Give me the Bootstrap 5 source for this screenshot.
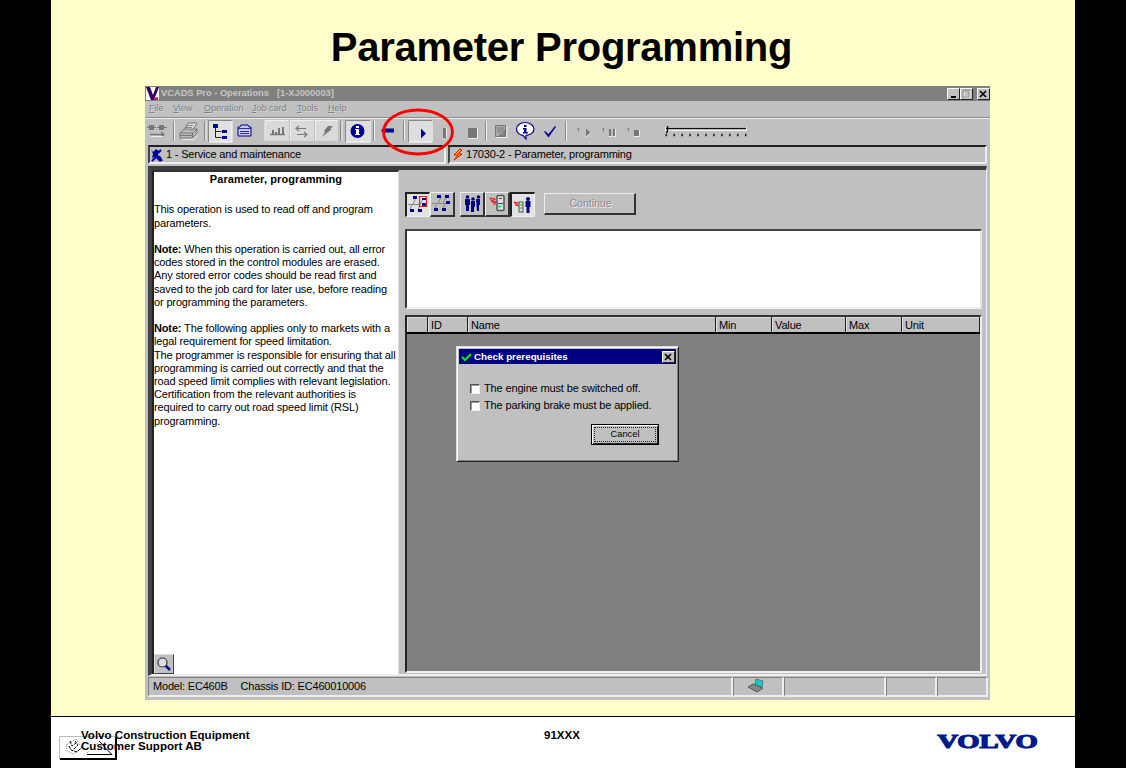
<!DOCTYPE html>
<html lang="en">
<head>
<meta charset="utf-8">
<title>Parameter Programming</title>
<link href="https://cdn.jsdelivr.net/npm/bootstrap@5.3.0/dist/css/bootstrap.min.css" rel="stylesheet">
<style>
body{background:#000;font-family:"Liberation Sans",Arial,sans-serif;font-size:11px;line-height:13.2px;letter-spacing:-.145px;color:#000;white-space:nowrap;overflow:hidden}
.slide{width:1024px;height:768px;background:#ffc}
.slide-title{font-size:40px;line-height:48px;letter-spacing:-.26px;font-weight:700;padding-top:23px;padding-right:3px;height:86px;margin:0}
.app{width:845px;height:614px;margin-left:94px;background:#c0c0c0}
.titlebar{height:15px;background:#808080;color:#c6c6c6;font-size:9.3px;font-weight:700;letter-spacing:0}
.titlebar>span{padding-top:1px}
.win-btn{width:13px;height:12px;background:#c0c0c0;border:1px solid;border-color:#fff #222 #222 #fff}
.menus{height:16px;padding:0 0 0 4px;font-size:9px;letter-spacing:0;color:#808080;text-shadow:1px 1px 0 #d6d6d6}
.menus span{flex:none}
.menus span::first-letter{text-decoration:underline}
.m-file,.m-view,.m-tools{width:31px}
.m-file{width:24px}
.m-op{width:48px}
.m-job{width:45px}
.tools{height:28px;border-top:1px solid #8c8c8c;box-shadow:inset 0 1px #eee}
.tools svg,.mode svg{display:block;flex:none}
.crumbs{padding:0 3px;gap:2px}
.crumb{height:19px;padding-top:1px;border:2px solid;border-color:#222 #eee #eee #444;letter-spacing:-.19px}
.crumb.first{width:298px}
.stage{margin:2px 3px 0;height:510px;border-top:4px solid #3d3d3d;border-left:4px solid #444;border-right:1px solid #eee;border-bottom:2px solid #eee}
.help-pane{width:247px;background:#fff;border-top:2px solid #333;border-left:2px solid #222;border-right:1px solid #ddd}
.help-pane h2{font-size:11px;line-height:13.2px;letter-spacing:.1px;font-weight:700;margin:1px 0 17.2px}
.help-pane p{margin:0 0 13.2px}
.zoomer{width:20px;height:20px;background:#c0c0c0;border:1px solid;border-color:#ddd #444 #444 #ddd}
.work{margin-left:6px;width:577px}
.mode{height:25px;margin-top:22px}
.tb{width:25px;height:25px;background:#c0c0c0;border:1px solid;border-color:#eee #333 #333 #eee;border-width:1px 2px 2px 1px}
.tb.on{background:#e3e3e3;border-color:#222 #eee #eee #222;border-width:2px 1px 1px 2px}
.tb.gap-before{margin-left:5px}
.go{width:92px;height:22px;margin:1px 0 0 9px;border:1px solid;border-width:1px 2px 2px 1px;border-color:#eee #333 #333 #eee;color:#8b8b8b;text-shadow:1px 1px #eee;font-size:10.5px;letter-spacing:0;padding-left:2px}
.note-box{height:80px;margin-top:12px;background:#fff;border:2px solid;border-color:#444 #e4e4e4 #eee #333}
.grid-box{height:358px;margin-top:6px;background:#808080;border:2px solid;border-color:#333 #eee #eee #222}
.grid-head{height:17px;background:#c0c0c0;border-bottom:2px solid #000}
.grid-head div{border-right:1px solid #222;box-shadow:inset 1px 1px #ddd;padding:2px 0 0 3px;height:15px}
.c-mark{width:21px}.c-id{width:40px}.c-name{width:248px}.c-min,.c-max{width:56px}.c-val{width:74px}
.dlg{width:223px;height:116px;margin:12px 0 0 49px;background:#c0c0c0;border:1px solid;border-color:#ddd #222 #222 #ddd;box-shadow:inset 1px 1px #fff,inset -1px -1px #808080;padding:2px}
.dlg-cap{height:15px;background:#000080;color:#fff;font-size:9.8px;font-weight:700;letter-spacing:0;padding-right:1px}
.check-row{margin:4px 0 0 11px}
.check-row.first{margin-top:18px}
.tick{width:10px;height:10px;background:#fff;border:1px solid;border-color:#555 #eee #eee #555;box-shadow:inset 1px 1px #999}
.cancel{width:68px;height:21px;margin:12px 17px 0 auto;border:1px solid #000;box-shadow:inset 1px 1px #fff,inset -1px -1px #222;padding:2px;font-size:9.3px;letter-spacing:0}
.cancel span{border:1px dotted #222;line-height:13px}
.status{height:22px;padding:1px 2px 0 3px}
.status div{border:1px solid;border-width:1px 2px 2px 1px;border-color:#808080 #eee #eee #808080;height:20px}
.s-model{width:585px;letter-spacing:-.19px;gap:13px}
.s-link,.s-c{width:51px}.s-b{width:102px}
.foot{height:52px;margin-top:16px;background:#fff;border-top:1px solid #000;font-weight:700}
.foot-name{left:30px;top:13px;font-size:11.55px;line-height:10.5px;letter-spacing:0}
.foot-code{left:493px;top:12px;font-size:11.5px;letter-spacing:0}
.foot-chip{left:8px;top:19px}
.foot-logo{left:884px;top:15px}
.ring{left:236px;top:20px;z-index:3}
</style>
</head>
<body>
<main class="slide mx-auto">
<h1 class="slide-title text-center">Parameter Programming</h1>
<section class="app position-relative">
 <div class="titlebar d-flex align-items-center">
  <svg width="16" height="15"><path d="M1 1h13v13H1z" fill="#fff"/><path d="M1 1h4l3 8 3-8h3L9 14H6z" fill="#300060"/><path d="M9 12l4-1v3H9z" fill="#d02040"/></svg>
  <span>VCADS Pro - Operations</span><span class="ms-2">[1-XJ000003]</span>
  <div class="d-flex ms-auto">
   <span class="win-btn"><svg width="11" height="10" class="d-block"><path d="M3 8h5" stroke="#000" stroke-width="2"/></svg></span>
   <span class="win-btn"><svg width="11" height="10" class="d-block"><path d="M3 2h6v6H3z" fill="none" stroke="#fff"/><path d="M2 2h6v6H2zM2 1h7" fill="none" stroke="#888"/></svg></span>
   <span class="win-btn ms-1"><svg width="11" height="10" class="d-block"><path d="M2 2l6 6M8 2l-6 6" stroke="#000" stroke-width="1.7"/></svg></span>
  </div>
 </div>
 <div class="menus d-flex align-items-center"><span class="d-block m-file">File</span><span class="d-block m-view">View</span><span class="d-block m-op">Operation</span><span class="d-block m-job">Job card</span><span class="d-block m-tools">Tools</span><span class="d-block">Help</span></div>
 <div class="tools d-flex">
  <!-- connect, print -->
  <svg width="62" height="27" viewBox="145 118 62 27"><g fill="#777"><path d="M149 125h5v5h-5zM159 125h5v5h-5z"/><path d="M147 127.500h9M157 127.500h10" stroke="#777" stroke-width="1"/><path d="M150 134.500h14M161 132l3 2.500-3 2.500" fill="none" stroke="#777" stroke-width="1.300"/></g><path d="M151 136.500h12" stroke="#eee"/>
  <path d="M173.500 121v20M204.500 121v20" stroke="#888"/><path d="M174.500 121v20M206 121v20" stroke="#eee"/>
  <path d="M184 130l4-7h9l-4 7z" fill="#ddd" stroke="#777"/><path d="M180 133l4-4h13l-4 4zM180 133v5h12l5-5v-4M180 135.500h13M192.500 138v-5" fill="#bbb" stroke="#777"/><path d="M187 125.500h6M186 127.500h6" stroke="#888"/><path d="M182 139.500h12l4-4" fill="none" stroke="#eee"/></svg>
  <!-- tree, folder -->
  <svg width="56" height="27" viewBox="207 118 56 27"><path d="M208 120h24v22h-24z" fill="#e0e0e0"/><path d="M208.500 142v-21.500H232" fill="none" stroke="#888"/><path d="M209 142h23v-21" fill="none" stroke="#fff"/><path d="M215.500 127v10.500h6M215.500 131.500h6" fill="none" stroke="#223"/><path d="M213 124h5v4h-5zM222 130h5v3h-5zM222 136h5v3h-5z" fill="#00009a"/>
  <path d="M238 127h2l1-2h7l1 2h2v9h-13z" fill="#c8c8e8" stroke="#000090"/><path d="M238 128.500h13M240 131.500h9M240 133.500h9" stroke="#3030a0"/></svg>
  <!-- chart, transfer, flash -->
  <svg width="80" height="27" viewBox="263 118 80 27"><path d="M265 120h24v21h-24zM290 120h24v21h-24zM315 120h23v21h-23z" fill="#dadada"/><path d="M265 141v-20.500h23M290.500 141v-20.500h23M315.500 141v-20.500h22" fill="none" stroke="#eee"/><path d="M270 134.500h15" stroke="#777" stroke-width="1.500"/><path d="M273 134v-4M276 134v-2M279 134v-6M283 134v-7" stroke="#777" stroke-width="2"/><path d="M297 128.500h9M299 126l-3 2.500 3 2.500M297 134.500h9M304 132l3 2.500-3 2.500" fill="none" stroke="#777" stroke-width="1.200"/><path d="M324 131l4-5h5l-3 3h2l-10 8 3-5z" fill="#777"/><path d="M340.500 121v20" stroke="#888"/><path d="M342 121v20" stroke="#eee"/></svg>
  <!-- information, back -->
  <svg width="65" height="27" viewBox="343 118 65 27"><path d="M345 120h24v22h-24z" fill="#dedede"/><path d="M345.500 142v-21.500H370" fill="none" stroke="#888"/><path d="M346 142h24v-21" fill="none" stroke="#fff"/><circle cx="357.500" cy="131" r="7" fill="#00009a"/><path d="M356 126h3v2h-3zM355 129h4v5h1v1h-5v-1h1v-4h-1z" fill="#fff"/><path d="M373.500 121v20M403.500 121v20" stroke="#888"/><path d="M374.500 121v20M404.500 121v20" stroke="#eee"/><path d="M381 130.500l4-4v2h9v4h-9v2z" fill="#00009a"/></svg>
  <!-- play, pause, stop -->
  <svg width="81" height="27" viewBox="408 118 81 27"><path d="M408 120h23v22h-23z" fill="#dedede"/><path d="M408.500 142v-21.500H432" fill="none" stroke="#888"/><path d="M409 142h23v-21" fill="none" stroke="#fff"/><path d="M421 128.500l5 5-5 5z" fill="#00009a"/><path d="M443 128h3v10h-3z" fill="#777"/><path d="M446.500 128v10" stroke="#eee"/><path d="M468 128h9v10h-9z" fill="#777"/><path d="M468 138.500h9.500V128" fill="none" stroke="#eee"/><path d="M485.500 121v20" stroke="#888"/><path d="M486.500 121v20" stroke="#eee"/></svg>
  <!-- notes, tip, accept -->
  <svg width="81" height="27" viewBox="489 118 81 27"><path d="M495.500 125.500h10v11h-10z" fill="#aaa" stroke="#777"/><path d="M497 128h7M497 130h7M497 132h4M499 136l6-6v6z" stroke="#777" fill="#888"/><path d="M496 137.500h11V126" fill="none" stroke="#eee"/><path d="M525 122.500c-5 0-8.500 3-8.500 6.500s3 6 6.500 6.300l3 3.500v-3.500c4.500 0 8-3 8-6.300s-4-6.500-9-6.500z" fill="#fff" stroke="#000090" stroke-width="1.200"/><path d="M524 125h2.500v2H524zM523 128h3.500v4h1.300v1.500H523V132h1v-2.500h-1z" fill="#00009a"/><path d="M544.500 131.500l4 3.500 7-8.500-7 10z" fill="#00009a" stroke="#00009a" stroke-width="1.200"/><path d="M565.500 121v20" stroke="#888"/><path d="M566.500 121v20" stroke="#eee"/></svg>
  <!-- stepping and speed -->
  <svg width="180" height="27" viewBox="570 118 180 27"><path d="M577 129l1.500-1v4M602 129l1.500-1v4M627 129l1.500-1v4" fill="none" stroke="#888"/><path d="M586 128.500l4.500 4-4.500 4z" fill="#777"/><path d="M586 137l5-4" stroke="#eee"/><path d="M609 129h2v7h-2zM613 129h2v7h-2zM634 130h5v6h-5z" fill="#777"/><path d="M609 136.500h3M613 136.500h2.500V129M634 136.500h5.500V130" fill="none" stroke="#eee"/><path d="M665 129h82" stroke="#eee" stroke-width="4"/><path d="M666 128.500h80" stroke="#111" stroke-width="1.400"/><path d="M667.500 126v5l-1 2" stroke="#111" stroke-width="1.500" fill="none"/><path d="M665.500 135h81.500" stroke="#222" stroke-width="2.500" stroke-dasharray="1.600 6.340"/></svg>
 </div>
 <div class="crumbs d-flex">
  <div class="crumb first d-flex align-items-center"><svg width="16" height="14"><path d="M1 1l2 3 3-3 3 2-1 4 4 5-2 2-5-5-3 1 1-4z" fill="#00009a"/><path d="M8 5l3-3M2 13l4-4M9 8l3 5" stroke="#00009a" stroke-width="2"/></svg>1 - Service and maintenance</div>
  <div class="crumb d-flex align-items-center flex-fill"><svg width="16" height="14"><path d="M10 1L4 7h4l-4 5 8-6H8l4-4z" fill="#fb0" stroke="#e00"/></svg>17030-2 - Parameter, programming</div>
 </div>
 <div class="stage d-flex">
  <div class="help-pane d-flex flex-column">
   <h2 class="text-center">Parameter, programming</h2>
   <p>This operation is used to read off and program<br>parameters.</p>
   <p><b>Note:</b> When this operation is carried out, all error<br>codes stored in the control modules are erased.<br>Any stored error codes should be read first and<br>saved to the job card for later use, before reading<br>or programming the parameters.</p>
   <p><b>Note:</b> The following applies only to markets with a<br>legal requirement for speed limitation.<br>The programmer is responsible for ensuring that all<br>programming is carried out correctly and that the<br>road speed limit complies with relevant legislation.<br>Certification from the relevant authorities is<br>required to carry out road speed limit (RSL)<br>programming.</p>
   <div class="zoomer mt-auto"><svg class="d-block" width="18" height="18"><path d="M10 10l5 5" stroke="#00009a" stroke-width="2.500"/><circle cx="7.500" cy="7.500" r="4.500" fill="#ddd" stroke="#333" stroke-width="1.200"/></svg></div>
  </div>
  <div class="work">
   <div class="mode d-flex">
    <div class="tb on"><svg width="22" height="22" viewBox="407 194 22 22"><path d="M408 204.500h13M413 204l3-6M412 205l-2 4M420 204l-2 6M420 204l3-5" stroke="#888" fill="none"/><path d="M413 196h4v3h-4zM410 209h4v3h-4zM418 209h4v3h-4zM422 198h4v2h-4zM422 203h4v3h-4z" fill="#000090"/><path d="M419.500 196.500h7v10h-7z" fill="none" stroke="#e22" stroke-width="1.200"/></svg></div>
    <div class="tb"><svg width="22" height="22" viewBox="431 193 22 22"><path d="M432 203.500h15M438 204l3-7M436 205l-1 4M445 204l-2 5M443 203l3-6" stroke="#888" fill="none"/><path d="M437 195h4v3h-4zM445 195h4v3h-4zM446 201h4v3h-4zM434 208h4v3h-4zM442 208h4v3h-4z" fill="#000090"/></svg></div>
    <div class="tb gap-before"><svg width="22" height="22" viewBox="461 193 22 22"><g fill="#000080"><circle cx="467.500" cy="197" r="1.800"/><circle cx="473" cy="199" r="1.800"/><circle cx="478.500" cy="197" r="1.800"/><path d="M465 199h5v6h-1v6h-3v-6h-1zM471 201h4v6h-1v5h-3v-5zM476 199h4v6h-1v6h-2z"/></g></svg></div>
    <div class="tb"><svg width="22" height="22" viewBox="486 193 22 22"><path d="M490 198l5 1-3 2 4 1-2 3M490 198l3 5h3" stroke="#e22" stroke-width="1.200" fill="none"/><rect x="497" y="195.500" width="7" height="15" rx="1" fill="#ddd" stroke="#555" stroke-width="1.500"/><path d="M499 198.500h3M498 203.500h5" stroke="#447"/><path d="M498 206.500h3" stroke="#0e2" stroke-width="1.500"/></svg></div>
    <div class="tb on"><svg width="22" height="22" viewBox="512 194 22 22"><path d="M514 202l4 1-2 2 4 1M514 202l3 4" stroke="#e22" stroke-width="1.200" fill="none"/><rect x="519" y="202" width="4" height="10" fill="#ddd" stroke="#555"/><path d="M519 205h4M519 208h4" stroke="#3a4"/><circle cx="528" cy="199" r="2" fill="#000080"/><path d="M525.500 201h5v6h-1v6h-3v-6h-1z" fill="#000080"/></svg></div>
    <div class="go d-flex align-items-center justify-content-center">Continue</div>
   </div>
   <div class="note-box"></div>
   <div class="grid-box">
    <div class="grid-head d-flex"><div class="c-mark"></div><div class="c-id">ID</div><div class="c-name">Name</div><div class="c-min">Min</div><div class="c-val">Value</div><div class="c-max">Max</div><div class="flex-fill">Unit</div></div>
    <div class="dlg">
     <div class="dlg-cap d-flex align-items-center"><svg width="15" height="13"><path d="M3 7l3 3 6-6" fill="none" stroke="#0e0" stroke-width="2.200"/></svg>Check prerequisites<span class="win-btn ms-auto"><svg width="11" height="10" class="d-block"><path d="M2 2l6 6M8 2l-6 6" stroke="#000" stroke-width="1.700"/></svg></span></div>
     <div class="check-row first d-flex align-items-center"><span class="tick me-1"></span>The engine must be switched off.</div>
     <div class="check-row d-flex align-items-center"><span class="tick me-1"></span>The parking brake must be applied.</div>
     <div class="cancel d-flex text-center"><span class="flex-fill">Cancel</span></div>
    </div>
   </div>
  </div>
 </div>
 <div class="status d-flex">
  <div class="s-model d-flex align-items-center"><span class="ms-1" style="margin-left:3px">Model: EC460B</span><span>Chassis ID: EC460010006</span></div>
  <div class="s-link"><svg class="d-block" width="48" height="17" viewBox="734 679 48 17"><path d="M756 680l7 2-1 6-7-1z" fill="#1cc" stroke="#577"/><path d="M748 688l5-3 10 4-6 4z" fill="#888" stroke="#555"/></svg></div>
  <div class="s-b"></div><div class="s-c"></div><div class="flex-fill"></div>
 </div>
 <svg class="ring position-absolute" width="75" height="52"><ellipse cx="37" cy="26" rx="34.500" ry="22" fill="none" stroke="#fa0000" stroke-width="2.900"/></svg>
</section>
<footer class="foot position-relative">
 <svg class="foot-chip position-absolute" width="59" height="25"><path d="M0 1h58v23H0z" fill="#fff"/><path d="M.5 23V.5H57" fill="none" stroke="#bbb"/><path d="M1 23h56V1" fill="none" stroke="#000" stroke-width="2"/><path d="M7 9l10-6 6 9-9 6-6-3z" fill="#fff" stroke="#888" stroke-dasharray="1 1"/><path d="M11 5l2 5 4-3M16 5l3 4-5 5M10 10l2 4 6 2 5-5" fill="none" stroke="#000" stroke-dasharray="3 1"/><path d="M28 18.500h25l-8-8M40 5l5 5" fill="none" stroke="#000"/><path d="M28 17L40 6" stroke="#999" stroke-dasharray="1 1"/></svg>
 <div class="foot-name position-absolute">Volvo Construction Equipment<br>Customer Support AB</div>
 <div class="foot-code position-absolute">91XXX</div>
 <svg class="foot-logo position-absolute" width="106" height="22"><text x="2.500" y="15.500" font-family="Liberation Serif" font-weight="700" font-size="18" textLength="100" lengthAdjust="spacingAndGlyphs" fill="#001a8c" stroke="#001a8c" stroke-width="1.1">VOLVO</text></svg>
</footer>
</main>
<script src="https://cdn.jsdelivr.net/npm/bootstrap@5.3.0/dist/js/bootstrap.bundle.min.js"></script>
</body>
</html>
